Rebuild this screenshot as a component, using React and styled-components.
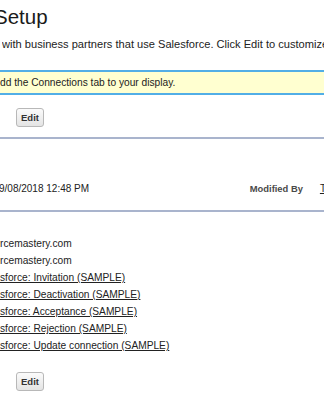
import styled, { createGlobalStyle } from 'styled-components';

const GlobalStyle = createGlobalStyle`
  html, body {
    margin: 0;
    padding: 0;
    background: #fff;
    overflow: hidden;
  }
  body {
    font-family: "Liberation Sans", Arial, sans-serif;
    color: #222;
  }
`;

const Page = styled.div`
  width: 324px;
  height: 400px;
  overflow: hidden;
`;

const Title = styled.h1`
  margin: 0 0 0 -6px;
  padding-top: 5px;
  font-size: 20.5px;
  font-weight: normal;
  line-height: 24px;
  color: #1a1a1a;
  white-space: nowrap;
`;

const Description = styled.p`
  margin: 8px 0 0 2px;
  font-size: 11.1px;
  line-height: 14px;
  color: #222;
  white-space: nowrap;
  overflow: hidden;
`;

const Notice = styled.div`
  margin-top: 19px;
  height: 21px;
  display: flex;
  align-items: center;
  background: #ffffd0;
  border-top: 2px solid #52aee6;
  border-bottom: 2px solid #52aee6;
  font-size: 10.2px;
  color: #222;
  white-space: nowrap;
`;

const ButtonRow = styled.div`
  display: flex;
  padding-left: 16px;
  margin-top: ${(p) => p.$top}px;
`;

const Button = styled.button`
  width: 28px;
  height: 19px;
  padding: 0;
  border: 1px solid #b8b8b8;
  border-radius: 3px;
  background: linear-gradient(#fbfbfb, #e4e4e4);
  font-family: "Liberation Sans", Arial, sans-serif;
  font-size: 9.5px;
  font-weight: bold;
  color: #333;
`;

const Rule = styled.div`
  height: 2px;
  background: #a9b4cd;
`;

const Section = styled.div`
  margin-top: ${(p) => p.$top}px;
`;

const InfoRow = styled.div`
  display: flex;
  align-items: center;
  height: 71px;
  padding-top: 28px;
  box-sizing: border-box;
  white-space: nowrap;
`;

const Value = styled.span`
  flex: 1;
  margin-left: -1px;
  font-size: 10px;
  color: #222;
`;

const Label = styled.span`
  font-size: 9.4px;
  font-weight: bold;
  color: #4a4a4a;
  margin-right: 17px;
`;

const UserLink = styled.a`
  font-size: 10px;
  color: #222;
  text-decoration: underline;
  margin-right: -2px;
`;

const DataList = styled.div`
  display: flex;
  flex-direction: column;
  padding-top: 23px;
  font-size: 10.2px;
  line-height: 17px;
  white-space: nowrap;
`;

const DataItem = styled.div`
  color: #222;
`;

const TemplateLink = styled.a`
  color: #222;
  text-decoration: underline;
`;

const templates = [
  'sforce: Invitation (SAMPLE)',
  'sforce: Deactivation (SAMPLE)',
  'sforce: Acceptance (SAMPLE)',
  'sforce: Rejection (SAMPLE)',
  'sforce: Update connection (SAMPLE)',
];

const App = () => {
  return (
    <Page>
      <GlobalStyle />
      <Title>Setup</Title>
      <Description>
        with business partners that use Salesforce. Click Edit to customize
      </Description>
      <Notice>dd the Connections tab to your display.</Notice>
      <ButtonRow $top={13}>
        <Button>Edit</Button>
      </ButtonRow>
      <Section $top={10}>
        <Rule />
        <InfoRow>
          <Value>9/08/2018 12:48 PM</Value>
          <Label>Modified By</Label>
          <UserLink href="#">T</UserLink>
        </InfoRow>
        <Rule />
      </Section>
      <DataList>
        <DataItem>rcemastery.com</DataItem>
        <DataItem>rcemastery.com</DataItem>
        {templates.map((t) => (
          <DataItem key={t}>
            <TemplateLink href="#">{t}</TemplateLink>
          </DataItem>
        ))}
      </DataList>
      <ButtonRow $top={18}>
        <Button>Edit</Button>
      </ButtonRow>
    </Page>
  );
};

export default App;
